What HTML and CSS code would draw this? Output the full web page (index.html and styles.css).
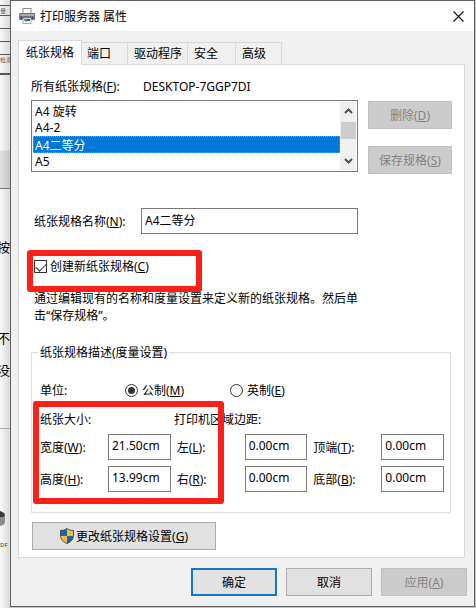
FILE: index.html
```html
<!DOCTYPE html>
<html lang="zh-CN">
<head>
<meta charset="utf-8">
<title>打印服务器 属性</title>
<link rel="stylesheet" href="styles.css">
</head>
<body>
<div class="desktop">
  <aside class="behind" aria-hidden="true">
    <div class="sheet">
      <div class="cell cell-first">量</div>
      <div class="cell"></div>
      <div class="cell"></div>
      <div class="cell"></div>
      <div class="cell cell-small">检测</div>
      <div class="cell"></div>
    </div>
    <div class="words">
      <span class="word word-a">按</span>
      <span class="word word-b">不</span>
      <span class="word word-c">没</span>
    </div>
    <div class="tray">
      <svg class="disk" width="5" height="16" viewBox="0 0 5 16"><path d="M0 0l4 2 1 2v8l-2 2-3 1z" fill="#8c8c8c"/><path d="M0 0l4 2 1 2-2 2-3 0z" fill="#3c3c3c"/></svg>
      <span class="file">DF</span>
    </div>
  </aside>

  <main class="dialog">
    <header class="titlebar">
      <svg class="printer" width="16" height="16" viewBox="0 0 16 16">
        <rect x="4" y="0.5" width="8" height="6" fill="#fff" stroke="#8b8f93"/>
        <rect x="0" y="5" width="16" height="7" rx="1" fill="#6f7276"/>
        <rect x="1" y="6" width="14" height="2" fill="#a9acb0"/>
        <rect x="2" y="9" width="12" height="2" fill="#3f4246"/>
        <rect x="4" y="10" width="8" height="5.500" fill="#fff" stroke="#a8acb0"/>
        <path d="M5 11h3v2H5z" fill="#2f9ac4"/><path d="M8 11h3v2H8z" fill="#35635a"/><path d="M6 13h2v1H6z" fill="#7cc6df"/>
      </svg>
      <h1>打印服务器 属性</h1>
      <button class="close" type="button" aria-label="关闭">
        <svg width="11" height="11" viewBox="0 0 11 11"><path d="M.5.5l10 10M10.500.5l-10 10" stroke="#111" stroke-width="1.100" fill="none"/></svg>
      </button>
    </header>

    <nav class="tabs" role="tablist">
      <button class="tab active" type="button" role="tab" aria-selected="true">纸张规格</button>
      <button class="tab tab-short" type="button" role="tab">端口</button>
      <button class="tab tab-long" type="button" role="tab">驱动程序</button>
      <button class="tab tab-mid" type="button" role="tab">安全</button>
      <button class="tab tab-short tab-last" type="button" role="tab">高级</button>
    </nav>

    <form class="panel">
      <div class="server">
        <label for="forms">所有纸张规格(<u>F</u>):</label>
        <span>DESKTOP-7GGP7DI</span>
      </div>

      <div class="forms">
        <div class="listbox">
          <select id="forms" size="4">
            <option>A4 旋转</option>
            <option>A4-2</option>
            <option selected>A4二等分</option>
            <option>A5</option>
          </select>
          <div class="scroll" aria-hidden="true">
            <svg width="9" height="6" viewBox="0 0 9 6"><path d="M1 5l3.500-3.500L8 5" fill="none" stroke="#505050" stroke-width="2"/></svg>
            <div class="thumb"></div>
            <svg class="down" width="9" height="6" viewBox="0 0 9 6"><path d="M1 1l3.500 3.500L8 1" fill="none" stroke="#505050" stroke-width="2"/></svg>
          </div>
        </div>
        <div class="actions">
          <button class="btn" type="button" disabled>删除(<u>D</u>)</button>
          <button class="btn" type="button" disabled>保存规格(<u>S</u>)</button>
        </div>
      </div>

      <div class="name">
        <label for="name">纸张规格名称(<u>N</u>):</label>
        <input class="field" id="name" type="text" value="A4二等分">
      </div>

      <div class="create">
        <input class="check" id="create" type="checkbox" checked>
        <label for="create">创建新纸张规格(<u>C</u>)</label>
        <div class="mark mark-create"></div>
      </div>

      <p class="hint">通过编辑现有的名称和度量设置来定义新的纸张规格。然后单击“保存规格”。</p>

      <fieldset class="group">
        <legend>纸张规格描述(度量设置)</legend>
        <div class="units">
          <span class="units-label">单位:</span>
          <span class="choice"><input class="radio" type="radio" name="unit" id="metric" checked><label for="metric">公制(<u>M</u>)</label></span>
          <span class="choice"><input class="radio" type="radio" name="unit" id="english"><label for="english">英制(<u>E</u>)</label></span>
        </div>
        <div class="heads">
          <span>纸张大小:</span>
          <span>打印机区域边距:</span>
        </div>
        <div class="measures">
          <div class="measure"><label for="w">宽度(<u>W</u>):</label><input class="field" id="w" type="text" value="21.50cm"></div>
          <div class="measure"><label for="l">左(<u>L</u>):</label><input class="field" id="l" type="text" value="0.00cm"></div>
          <div class="measure"><label for="t">顶端(<u>T</u>):</label><input class="field" id="t" type="text" value="0.00cm"></div>
          <div class="measure"><label for="h">高度(<u>H</u>):</label><input class="field" id="h" type="text" value="13.99cm"></div>
          <div class="measure"><label for="r">右(<u>R</u>):</label><input class="field" id="r" type="text" value="0.00cm"></div>
          <div class="measure"><label for="b">底部(<u>B</u>):</label><input class="field" id="b" type="text" value="0.00cm"></div>
        </div>
        <div class="mark mark-size"></div>
      </fieldset>

      <button class="btn change" type="button">
        <svg width="14" height="16" viewBox="0 0 14 16">
          <path d="M7 .5C5 2 3 2.500.5 2.500V7c0 4 2.500 7 6.500 8.500C11 14 13.500 11 13.500 7V2.500C11 2.500 9 2 7 .5z" fill="#f8bd35"/>
          <path d="M7 8h6.500C13 11.500 11 14 7 15.500z" fill="#1769b5"/>
          <path d="M.5 2.500C3 2.500 5 2 7 .5V8H.5z" fill="#1769b5"/>
          <path d="M7 .5C5 2 3 2.500.5 2.500V7c0 4 2.500 7 6.500 8.500C11 14 13.500 11 13.500 7V2.500C11 2.500 9 2 7 .5z" fill="none" stroke="#4a4f55"/>
        </svg>
        <span>更改纸张规格设置(<u>G</u>)</span>
      </button>
    </form>

    <footer class="footer">
      <button class="btn primary" type="button">确定</button>
      <button class="btn" type="button">取消</button>
      <button class="btn apply" type="button" disabled>应用(<u>A</u>)</button>
    </footer>
  </main>
</div>
</body>
</html>
```
FILE: styles.css
```css
* {
  box-sizing: border-box;
}

body {
  margin: 0;
  background: #c4c4c4;
}

body,
button,
input,
select {
  font-family: "Noto Sans", "Noto Sans CJK SC", sans-serif;
  font-size: 12px;
  line-height: 17px;
  color: #000;
}

h1,
p {
  margin: 0;
  font-size: 12px;
  font-weight: 400;
}

u {
  text-underline-offset: 1px;
}

.desktop {
  display: grid;
  grid-template-columns: 10px 1fr;
  padding-right: 1px;
  min-height: 100vh;
  align-items: start;
}

/* Document window partly covered by the dialog */
.behind {
  align-self: stretch;
  display: flex;
  flex-direction: column;
  overflow: hidden;
  background: linear-gradient(90deg, #fafafa, #d8d8d8);
}

.sheet {
  padding-top: 5px;
  height: 189px;
  border-bottom: 1px solid #777;
  background: linear-gradient(transparent 150px, #00000018 151px);
}

.cell {
  height: 13px;
  border-top: 1px solid #555;
  font-size: 6px;
  line-height: 10px;
  white-space: nowrap;
  color: #555;
}

.cell-first {
  height: 10px;
}

.cell-small {
  height: 20px;
  border-bottom: 1px solid #555;
}

.words {
  display: flex;
  flex-direction: column;
  padding-top: 50px;
  height: 240px;
  border-bottom: 1px solid #aaa;
}

.word {
  width: 14px;
  margin-left: -3px;
  font-size: 13px;
}

.word-b {
  margin-top: 74px;
}

.word-c {
  margin-top: 15px;
}

.tray {
  display: flex;
  flex-direction: column;
  padding-top: 82px;
}

.file {
  font-size: 6px;
  line-height: 8px;
  margin-top: 14px;
  color: #444;
}

.dialog {
  border: 1px solid #606060;
  background: #f0f0f0;
}

.titlebar {
  display: flex;
  align-items: center;
  height: 30px;
  padding: 0 10px 0 8px;
  background: #fff;
}

.titlebar h1 {
  flex: 1;
  margin-left: 5px;
}

.close {
  display: flex;
  padding: 0;
  border: 0;
  background: none;
}

.tabs {
  display: flex;
  align-items: flex-end;
  height: 33px;
  padding-left: 7px;
}

.tab {
  height: 22px;
  padding: 0 0 0 5px;
  border: 1px solid #d9d9d9;
  border-width: 1px 1px 0 0;
  background: #f0f0f0;
  text-align: left;
}

.tab.active {
  position: relative;
  height: 25px;
  width: 64px;
  margin-bottom: -1px;
  padding: 0 0 2px 7px;
  border-left-width: 1px;
  background: #fff;
}

.tab-short {
  width: 46px;
}

.tab-long {
  width: 60px;
}

.tab-mid {
  width: 48px;
}

.tab-long,
.tab-mid,
.tab-last {
  padding-left: 6px;
}

.panel {
  margin: 0 9px 0 7px;
  padding: 13px 13px 7px 12px;
  border: 1px solid #d9d9d9;
  background: #fff;
}

.server {
  display: grid;
  grid-template-columns: 112px 1fr;
}

.forms {
  display: flex;
  gap: 10px;
  margin-top: 5px;
}

.listbox {
  flex: 1;
  display: flex;
  height: 72px;
  padding: 1px;
  border: 1px solid #7a7a7a;
}

.listbox select {
  flex: 1;
  min-width: 0;
  height: 68px;
  margin: 0;
  padding: 0;
  border: 0;
  border-radius: 0;
  outline: 0;
  overflow: hidden;
  background: #fff;
}

.listbox option {
  min-height: 17px;
  height: 17px;
  padding: 0 2px;
  line-height: 17px;
  color: #000;
}

.listbox option:checked {
  background: #0078d7 linear-gradient(#0078d7, #0078d7);
  color: #fff;
  outline: 1px dotted #e08728;
  outline-offset: -1px;
}

.scroll {
  display: flex;
  flex-direction: column;
  align-items: center;
  width: 16px;
  padding: 6px 0;
  background: #f0f0f0;
}

.thumb {
  width: 15px;
  height: 17px;
  margin-top: 8px;
  background: #cdcdcd;
}

.down {
  margin-top: auto;
}

.actions {
  display: flex;
  flex-direction: column;
  gap: 17px;
  width: 84px;
  margin: 1px -1px 0 0;
}

.btn {
  display: flex;
  align-items: center;
  justify-content: center;
  height: 28px;
  padding: 0;
  border: 1px solid #adadad;
  background: #e1e1e1;
}

.btn:disabled {
  border-color: #bfbfbf;
  background: #ccc;
  color: #838383;
}

.field {
  min-width: 0;
  width: 100%;
  height: 26px;
  margin: 0;
  padding: 0 3px 3px;
  border: 1px solid #7a7a7a;
  border-radius: 0;
  background: #fff;
}

.name {
  display: grid;
  grid-template-columns: 107px 1fr;
  align-items: center;
  margin: 34px 93px 0 3px;
}

.create {
  position: relative;
  display: flex;
  align-items: center;
  gap: 3px;
  margin: 24px 0 0 3px;
}

.check,
.radio {
  appearance: none;
  flex: none;
  width: 13px;
  height: 13px;
  margin: 0;
  border: 1px solid #333;
  background: #fff;
}

.check:checked {
  display: grid;
  justify-items: center;
}

.check:checked::before {
  content: "";
  width: 9px;
  height: 5px;
  margin-top: 2px;
  border: solid #333;
  border-width: 0 0 1px 1px;
  transform: rotate(-45deg);
}

.radio {
  display: grid;
  place-items: center;
  border-radius: 50%;
}

.radio:checked::before {
  content: "";
  width: 7px;
  height: 7px;
  border-radius: 50%;
  background: #333;
}

/* Red annotation frames laid over the form */
.mark {
  position: absolute;
  border: 6px solid #fd2016;
  border-radius: 3px;
  pointer-events: none;
}

.mark-create {
  top: -8px;
  left: -7px;
  width: 175px;
  height: 42px;
}

.mark-size {
  top: 40px;
  left: 1px;
  width: 191px;
  height: 103px;
}

.hint {
  margin: 15px 89px 0 3px;
}

.group {
  position: relative;
  min-width: 0;
  margin: 20px 0 0;
  padding: 21px 6px 20px 8px;
  border: 1px solid #dcdcdc;
}

.group legend {
  margin-left: -2px;
  padding: 0 2px;
}

.units {
  display: flex;
}

.units-label {
  width: 85px;
}

.choice {
  display: flex;
  align-items: center;
  gap: 4px;
  width: 105px;
}

.heads {
  display: grid;
  grid-template-columns: 134px 1fr;
  margin-top: 12px;
}

.measures {
  display: grid;
  grid-template-columns: repeat(3, 1fr);
  gap: 6px;
  margin-top: 6px;
}

.measure {
  display: grid;
  grid-template-columns: 68px 1fr;
  align-items: center;
}

.change {
  gap: 2px;
  width: 184px;
  margin: 9px 0 0 1px;
}

.footer {
  display: flex;
  justify-content: flex-end;
  gap: 9px;
  padding: 10px 7px 10px 6px;
}

.footer .btn {
  width: 86px;
}

.footer .primary {
  border: 2px solid #1576c4;
}
```
